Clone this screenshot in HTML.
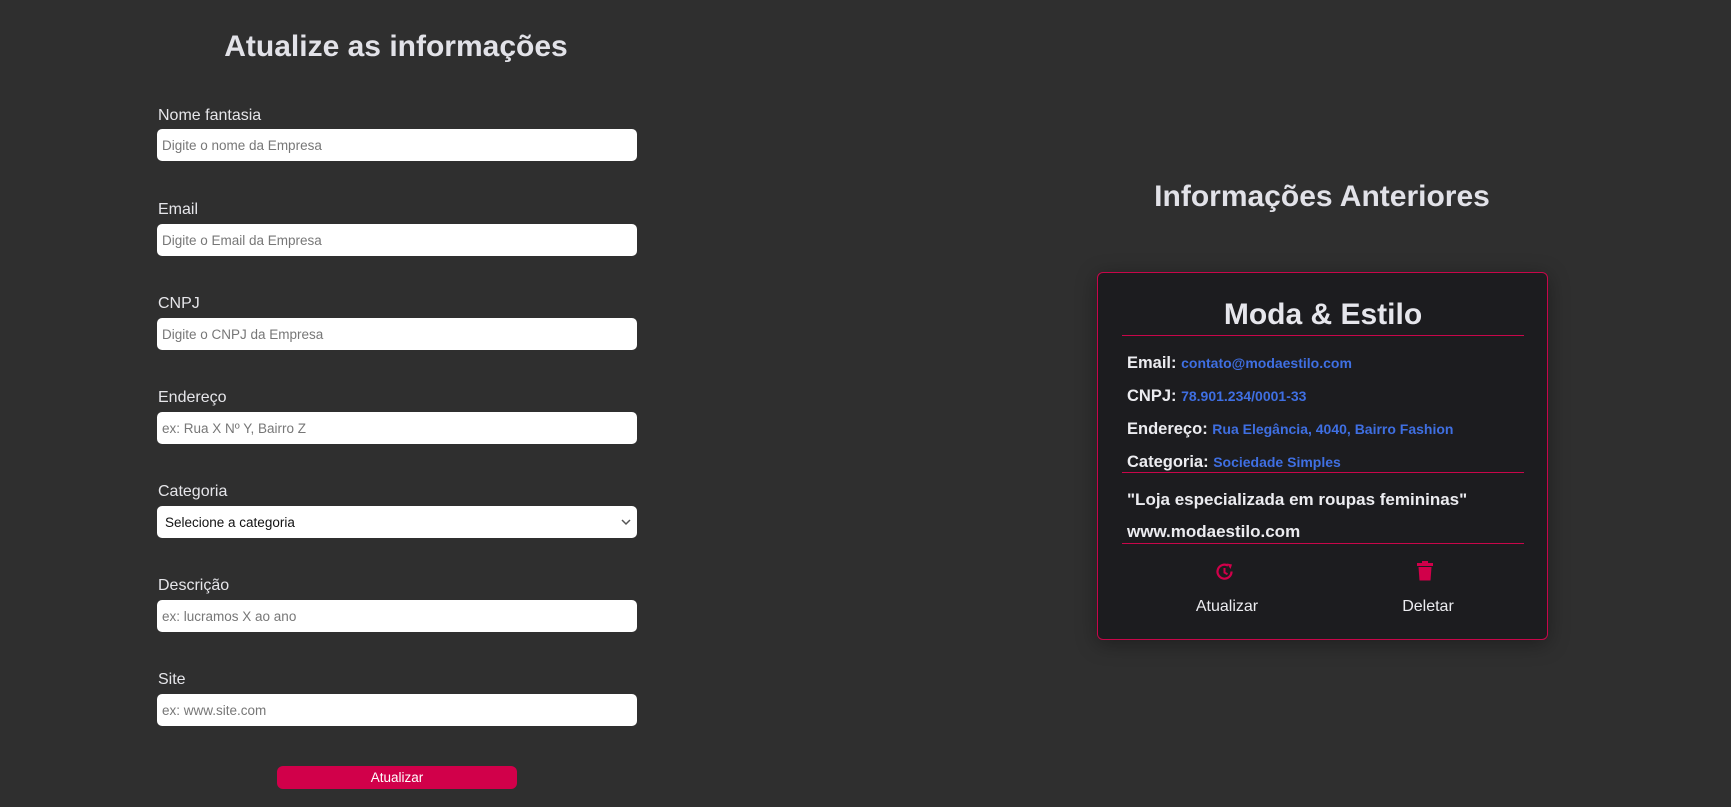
<!DOCTYPE html>
<html><head><meta charset="utf-8"><style>
*{margin:0;padding:0;box-sizing:border-box}
body{width:1731px;height:807px;background:#2f2f2f;font-family:"Liberation Sans",Arial,sans-serif;color:#e2e2e8;position:relative;overflow:hidden}
.a{position:absolute}
h1{position:absolute;font-size:30px;font-weight:bold;white-space:nowrap;text-align:center}
.lab{position:absolute;left:158px;font-size:16px;color:#e6e6ea}
.inp{position:absolute;left:157px;width:480px;height:32px;background:#fff;border-radius:5px;font-size:13.5px;color:#777;padding:9px 0 0 5px}
.inp.sel{color:#111;padding-left:8px}
.btn{position:absolute;left:277px;top:766px;width:240px;height:23px;background:#d1004a;border-radius:6px;color:#fff;font-size:13.5px;text-align:center;line-height:23px}
.card{position:absolute;left:1097px;top:272px;width:451px;height:368px;background:#1c1c1f;border:1px solid #c8064a;border-radius:6px;box-shadow:0 4px 20px rgba(0,0,0,.35)}
.hr{position:absolute;left:1122px;width:402px;height:1px;background:#c8064a}
.row{position:absolute;left:1127px;font-size:16.5px;font-weight:bold;color:#ececf0;white-space:nowrap}
.row span{color:#3f6fe2;font-size:14px}
</style></head><body>
<h1 style="left:196px;width:400px;top:30px">Atualize as informações</h1>
<div class="lab" style="top:107px">Nome fantasia</div>
<div class="inp" style="top:129px">Digite o nome da Empresa</div>
<div class="lab" style="top:201px">Email</div>
<div class="inp" style="top:224px">Digite o Email da Empresa</div>
<div class="lab" style="top:295px">CNPJ</div>
<div class="inp" style="top:318px">Digite o CNPJ da Empresa</div>
<div class="lab" style="top:389px">Endereço</div>
<div class="inp" style="top:412px">ex: Rua X Nº Y, Bairro Z</div>
<div class="lab" style="top:483px">Categoria</div>
<div class="inp sel" style="top:506px">Selecione a categoria
<svg class="a" style="right:6px;top:12px" width="10" height="8" viewBox="0 0 10 8"><path d="M1 2l4 4 4-4" stroke="#555" stroke-width="1.5" fill="none"/></svg></div>
<div class="lab" style="top:577px">Descrição</div>
<div class="inp" style="top:600px">ex: lucramos X ao ano</div>
<div class="lab" style="top:671px">Site</div>
<div class="inp" style="top:694px">ex: www.site.com</div>
<div class="btn">Atualizar</div>

<h1 style="left:1122px;width:400px;top:180px">Informações Anteriores</h1>
<div class="card"></div>
<div class="a" style="left:1122px;width:402px;top:298px;text-align:center;font-size:30px;font-weight:bold;color:#e6e6ec">Moda &amp; Estilo</div>
<div class="hr" style="top:335px"></div>
<div class="row" style="top:354px">Email: <span>contato@modaestilo.com</span></div>
<div class="row" style="top:387px">CNPJ: <span>78.901.234/0001-33</span></div>
<div class="row" style="top:420px">Endereço: <span>Rua Elegância, 4040, Bairro Fashion</span></div>
<div class="row" style="top:453px">Categoria: <span>Sociedade Simples</span></div>
<div class="hr" style="top:472px"></div>
<div class="row" style="top:490px;font-size:17px">"Loja especializada em roupas femininas"</div>
<div class="row" style="top:522px;font-size:17px">www.modaestilo.com</div>
<div class="hr" style="top:543px"></div>
<svg class="a" style="left:1215px;top:562px" width="20" height="20" viewBox="0 0 20 20"><path d="M16.5 9.5A7 7 0 1 1 13 3.6" stroke="#d1004a" stroke-width="2.2" fill="none"/><path d="M12 1.5l5 1-1.5 4.5z" fill="#d1004a"/><path d="M9.5 6v4.5l3 1.8" stroke="#d1004a" stroke-width="2" fill="none"/></svg>
<svg class="a" style="left:1417px;top:561px" width="16" height="20" viewBox="0 0 16 20"><rect x="0" y="2" width="16" height="3" fill="#d1004a"/><rect x="5" y="0" width="6" height="3" fill="#d1004a"/><path d="M1.5 6h13l-1 13.5h-11z" fill="#d1004a"/></svg>
<div class="a" style="left:1177px;width:100px;top:598px;text-align:center;font-size:16px;color:#ececf0">Atualizar</div>
<div class="a" style="left:1378px;width:100px;top:598px;text-align:center;font-size:16px;color:#ececf0">Deletar</div>
</body></html>
